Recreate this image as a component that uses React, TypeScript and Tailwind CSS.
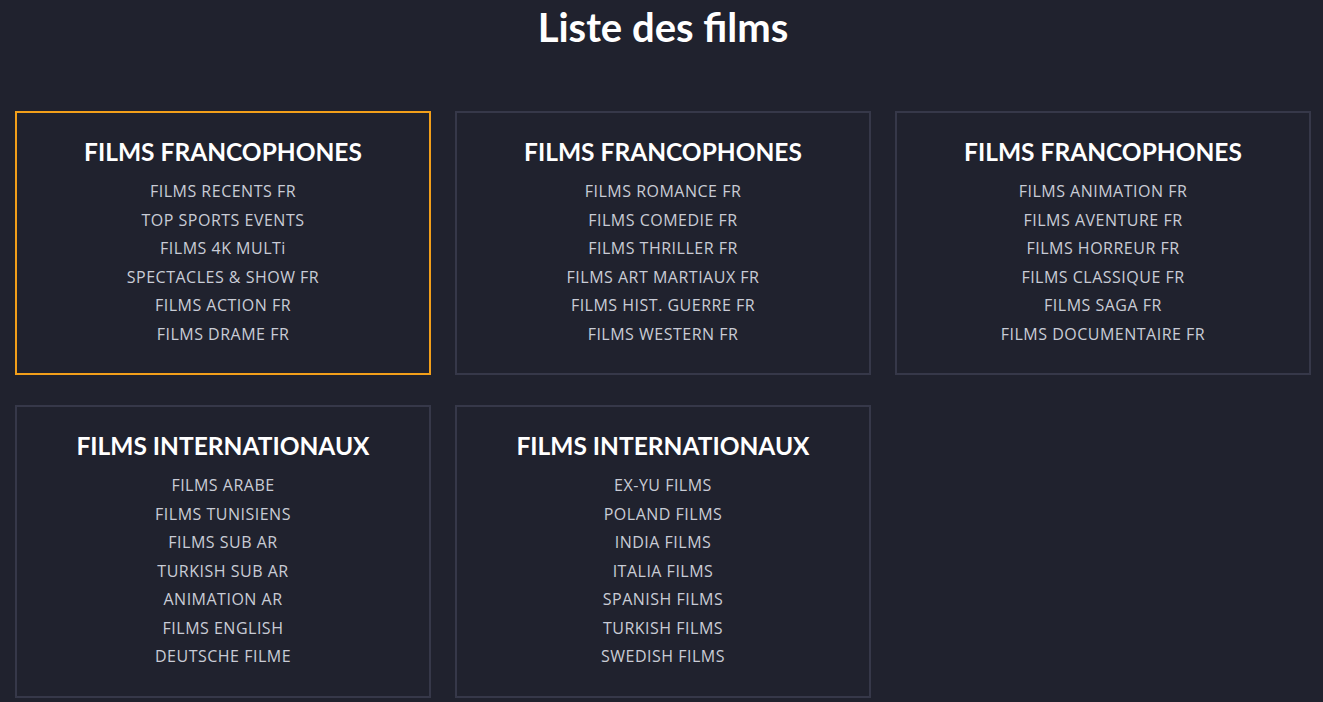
const groups = [
  {
    title: "FILMS FRANCOPHONES",
    items: ["FILMS RECENTS FR", "TOP SPORTS EVENTS", "FILMS 4K MULTi", "SPECTACLES & SHOW FR", "FILMS ACTION FR", "FILMS DRAME FR"],
  },
  {
    title: "FILMS FRANCOPHONES",
    items: ["FILMS ROMANCE FR", "FILMS COMEDIE FR", "FILMS THRILLER FR", "FILMS ART MARTIAUX FR", "FILMS HIST. GUERRE FR", "FILMS WESTERN FR"],
  },
  {
    title: "FILMS FRANCOPHONES",
    items: ["FILMS ANIMATION FR", "FILMS AVENTURE FR", "FILMS HORREUR FR", "FILMS CLASSIQUE FR", "FILMS SAGA FR", "FILMS DOCUMENTAIRE FR"],
  },
  {
    title: "FILMS INTERNATIONAUX",
    items: ["FILMS ARABE", "FILMS TUNISIENS", "FILMS SUB AR", "TURKISH SUB AR", "ANIMATION AR", "FILMS ENGLISH", "DEUTSCHE FILME"],
  },
  {
    title: "FILMS INTERNATIONAUX",
    items: ["EX-YU FILMS", "POLAND FILMS", "INDIA FILMS", "ITALIA FILMS", "SPANISH FILMS", "TURKISH FILMS", "SWEDISH FILMS"],
  },
];

export default function App() {
  return (
    <main className="h-screen overflow-hidden bg-[#20222e] pl-[15px] pr-[12px] pt-[3px] font-['Lato',sans-serif]">
      <h1 className="text-center text-[40px] font-bold leading-[48px] text-white">Liste des films</h1>
      <div className="mt-[60px] grid grid-cols-3 gap-x-[24px] gap-y-[30px]">
        {groups.map((g, i) => (
          <section
            key={i}
            className={
              "border-2 px-4 pt-[23px] pb-[25px] text-center " +
              (i === 0 ? "border-[#f29f1a]" : "border-[#363849]")
            }
          >
            <h2 className="mb-[9px] text-[24.5px] font-bold leading-8 text-white">{g.title}</h2>
            <ul>
              {g.items.map((it) => (
                <li
                  key={it}
                  className="font-['Open_Sans',sans-serif] text-[16px] tracking-[0.5px] leading-[28.5px] text-[#c9ccd6]"
                >
                  {it}
                </li>
              ))}
            </ul>
          </section>
        ))}
      </div>
    </main>
  );
}
